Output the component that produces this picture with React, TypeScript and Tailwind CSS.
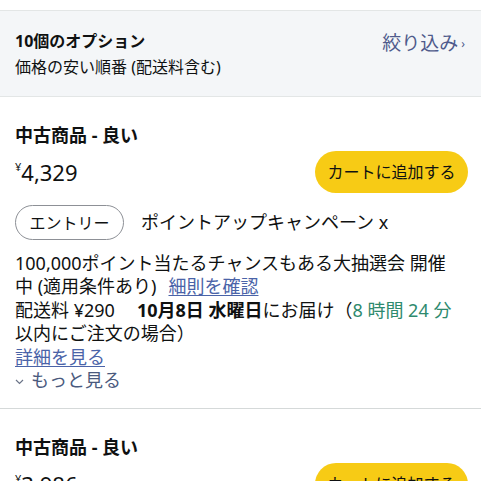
import React from "react";

const font = { fontFamily: '"Noto Sans", "Noto Sans CJK JP", sans-serif' };

function Card({ price, showDetails }: { price: string; showDetails: boolean }) {
  return (
    <div className="px-[15px] pt-[26px] pb-[16px] border-b border-[#d5d9d9]">
      <div className="text-[18px] font-bold leading-[24px] text-[#0f1111]">中古商品 - 良い</div>
      <div className="mt-[4px] flex items-center justify-between">
        <div className="flex items-start text-[#0f1111]">
          <span className="text-[11px] leading-[14px] mt-[2px]">¥</span>
          <span className="text-[22px] leading-[28px]">{price}</span>
        </div>
        <button className="-mr-[2px] h-[42px] w-[153px] rounded-full bg-[#f7cb15] text-[16px] text-[#0f1111]">
          カートに追加する
        </button>
      </div>
      {showDetails && (
        <>
          <div className="mt-[12px] flex items-center">
            <span className="inline-flex h-[35px] w-[109px] items-center justify-center rounded-full border border-[#8d9096] text-[16px] text-[#0f1111]">
              エントリー
            </span>
            <span className="ml-[17px] text-[18px] text-[#0f1111]">ポイントアップキャンペーン x</span>
          </div>
          <div className="mt-[12px] text-[18px] leading-[23.4px] text-[#0f1111]">
            <div>100,000ポイント当たるチャンスもある大抽選会 開催</div>
            <div>
              中 (適用条件あり)<span className="ml-[12px] text-[#4a63a8] underline underline-offset-2">細則を確認</span>
            </div>
            <div>
              配送料 ¥290<span className="ml-[22px] font-bold">10月8日 水曜日</span>にお届け（
              <span className="text-[#2e8a6e]">8 時間 24 分</span>
            </div>
            <div>以内にご注文の場合）</div>
            <div className="text-[#4a63a8] underline underline-offset-2">詳細を見る</div>
            <div className="flex items-center text-[#4a5a7e]">
              <svg width="9" height="6" viewBox="0 0 9 6" className="mr-[7px] mt-[2px]">
                <path d="M1 1 L4.5 4.5 L8 1" fill="none" stroke="#6b7488" strokeWidth="1.2" />
              </svg>
              もっと見る
            </div>
          </div>
        </>
      )}
    </div>
  );
}

export default function App() {
  return (
    <div className="w-[481px] h-[481px] overflow-hidden bg-white" style={font}>
      <div className="h-[11px] border-b border-[#e3e6e6] bg-white" />
      <div className="flex h-[86px] items-center justify-between border-b border-[#e3e6e6] bg-[#f4f6f8] px-[15px]">
        <div className="flex flex-col">
          <span className="text-[16px] font-bold leading-[26px] text-[#0f1111]">10個のオプション</span>
          <span className="text-[16px] leading-[26px] text-[#0f1111]">価格の安い順番 (配送料含む)</span>
        </div>
        <div className="mr-[1px] -mt-[20px] flex items-center text-[19px] text-[#4f5b8c]">
          絞り込み<span className="ml-[3px] text-[12px]">›</span>
        </div>
      </div>
      <Card price="4,329" showDetails={true} />
      <Card price="3,986" showDetails={false} />
    </div>
  );
}
